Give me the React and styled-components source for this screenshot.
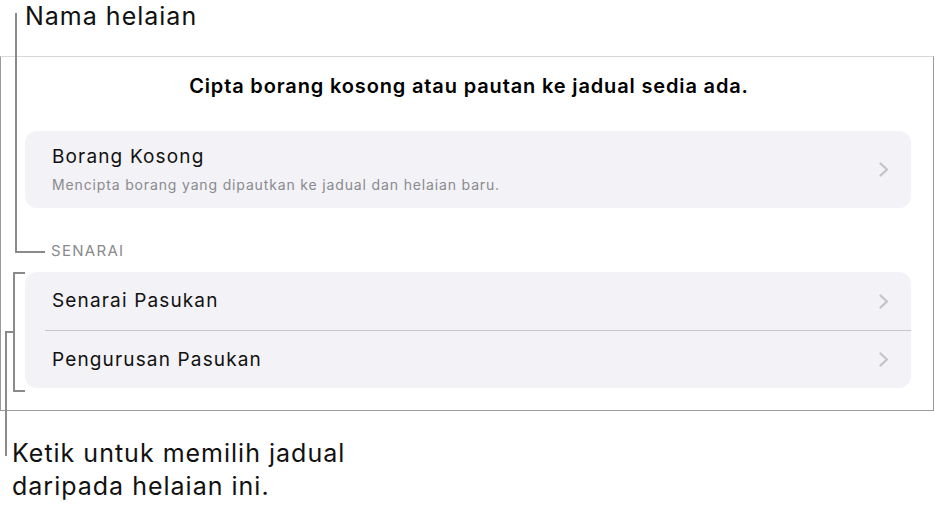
import styled, { createGlobalStyle } from "styled-components";

const GlobalStyle = createGlobalStyle`
  html, body {
    margin: 0;
    padding: 0;
    background: #ffffff;
  }
  body {
    font-family: "Inter", "Roboto", "Noto Sans", sans-serif;
    color: #000;
    -webkit-font-smoothing: antialiased;
  }
`;

const Page = styled.div`
  position: relative;
  width: 935px;
  height: 513px;
  overflow: hidden;
`;

const Callout = styled.div`
  font-size: 25px;
  line-height: ${(p) => p.$lh || 30}px;
  letter-spacing: 1px;
  color: #111;
  padding-left: ${(p) => p.$left}px;
`;

const Header = styled.div`
  height: 56px;
  box-sizing: border-box;
  padding-top: 1px;
`;

const Frame = styled.div`
  box-sizing: border-box;
  width: 934px;
  border: 1px solid #9a9a9a;
  border-top-color: #d8d8d8;
  padding: 17px 22px 22px 24px;
`;

const Title = styled.h1`
  margin: 0 0 33px;
  font-size: 20px;
  line-height: 24px;
  font-weight: 600;
  text-align: center;
  letter-spacing: 0.85px;
  padding-left: 2px;
`;

const Card = styled.div`
  background: #f2f2f7;
  border-radius: 12px;
  overflow: hidden;
`;

const Row = styled.div`
  display: flex;
  align-items: center;
  justify-content: space-between;
  box-sizing: border-box;
  height: ${(p) => p.$h}px;
  padding: ${(p) => (p.$tall ? "14px" : "0")} 22px ${(p) => (p.$tall ? "14px" : "0")} 27px;

  & + & {
    border-top: 1px solid #c8c8cc;
    margin-left: 20px;
    padding-left: 7px;
  }
`;

const RowText = styled.div`
  display: flex;
  flex-direction: column;
  gap: 7px;
`;

const RowTitle = styled.div`
  font-size: 19px;
  line-height: 24px;
  letter-spacing: 1.15px;
  color: #111;
`;

const RowSub = styled.div`
  font-size: 14px;
  line-height: 18px;
  color: #8a8a8e;
  letter-spacing: 0.85px;
`;

const SectionLabel = styled.div`
  margin: 34px 0 12px 26px;
  font-size: 15px;
  line-height: 18px;
  color: #8a8a8e;
  letter-spacing: 1.3px;
`;

const Footer = styled.div`
  margin-top: 26px;
`;

const Lines = styled.svg`
  position: absolute;
  left: 0;
  top: 0;
  pointer-events: none;
`;

function Chevron() {
  return (
    <svg width="10" height="15" viewBox="0 0 10 15">
      <polyline
        points="1.5,1.5 8,7.5 1.5,13.5"
        fill="none"
        stroke="#c4c4c7"
        strokeWidth="2.2"
        strokeLinecap="round"
        strokeLinejoin="round"
      />
    </svg>
  );
}

function ListRow({ title, sub, h }) {
  return (
    <Row $h={h} $tall={!!sub}>
      <RowText>
        <RowTitle>{title}</RowTitle>
        {sub && <RowSub>{sub}</RowSub>}
      </RowText>
      <Chevron />
    </Row>
  );
}

export default function App() {
  return (
    <>
      <GlobalStyle />
      <Page>
        <Header>
          <Callout $left={25}>Nama helaian</Callout>
        </Header>

        <Frame>
          <Title>Cipta borang kosong atau pautan ke jadual sedia ada.</Title>
          <Card>
            <ListRow
              h={77}
              title="Borang Kosong"
              sub="Mencipta borang yang dipautkan ke jadual dan helaian baru."
            />
          </Card>

          <SectionLabel>SENARAI</SectionLabel>
          <Card>
            <ListRow h={58} title="Senarai Pasukan" />
            <ListRow h={58} title="Pengurusan Pasukan" />
          </Card>
        </Frame>

        <Footer>
          <Callout $left={12} $lh={33}>
            Ketik untuk memilih jadual
            <br />
            daripada helaian ini.
          </Callout>
        </Footer>

        {/* leader lines for the callouts */}
        <Lines width="935" height="513">
          <g fill="none" stroke="#8a8a8a" strokeWidth="2">
            <polyline points="16,13 16,252 45,252" />
            <polyline points="25,273 14,273 14,391 25,391" />
            <polyline points="13,332 6,332 6,456" />
          </g>
        </Lines>
      </Page>
    </>
  );
}
